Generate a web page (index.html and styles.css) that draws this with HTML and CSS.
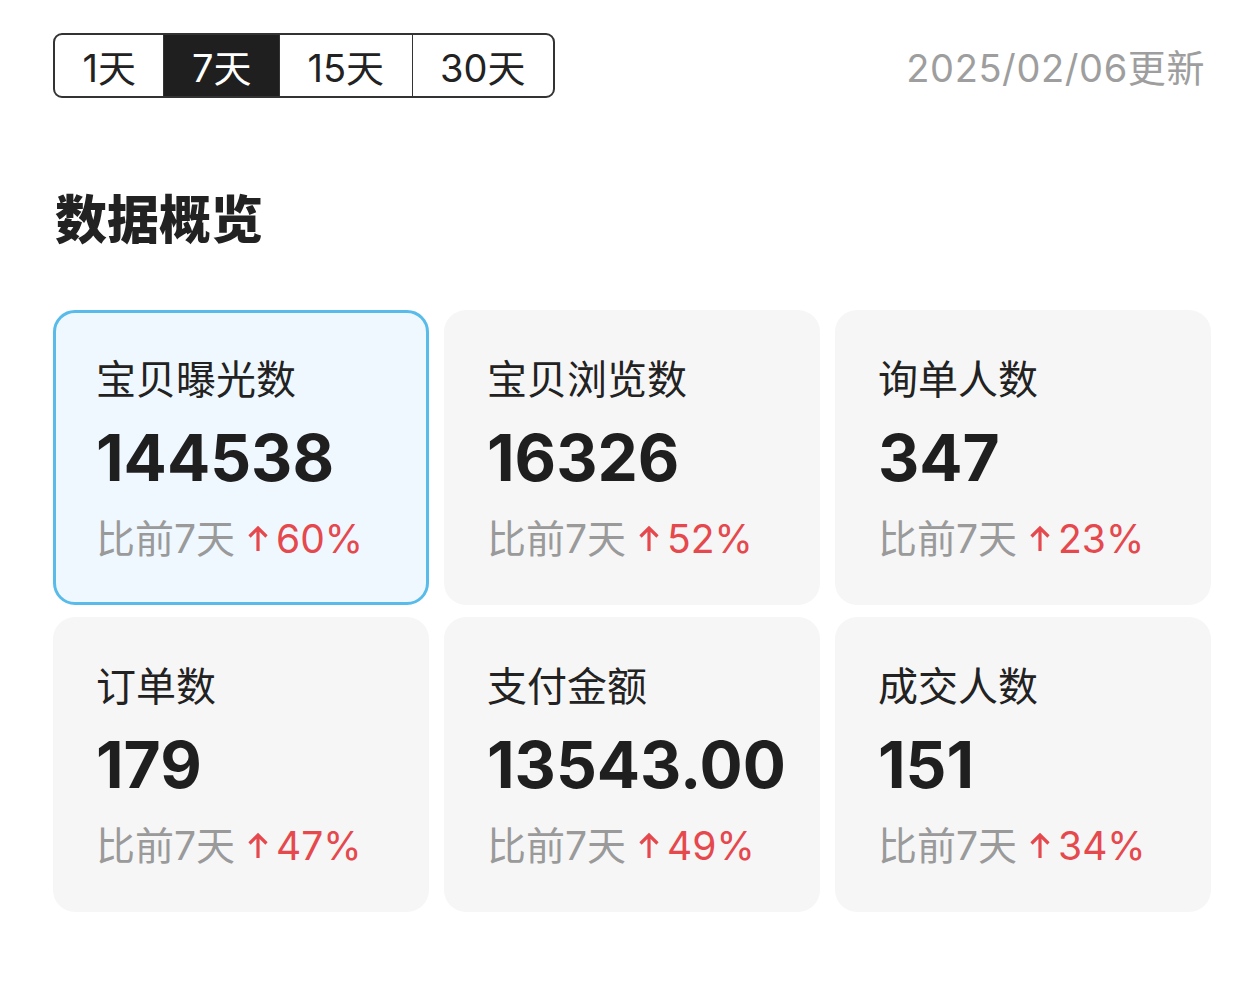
FILE: index.html
```html
<!DOCTYPE html>
<html lang="zh-CN">
<head>
    <meta charset="UTF-8">
    <meta name="viewport" content="width=device-width, initial-scale=1.0">
    <title>数据概览</title>
    <link rel="stylesheet" href="styles.css">
</head>
<body>
    <div class="header">
        <div class="tabs">
            <div class="tab">1天</div>
            <div class="tab active">7天</div>
            <div class="tab">15天</div>
            <div class="tab">30天</div>
        </div>
        <div class="update-time">2025/02/06更新</div>
    </div>

    <h2 class="section-title">数据概览</h2>

    <div class="stats">
        <div class="stat-card selected">
            <div class="stat-label">宝贝曝光数</div>
            <div class="stat-value">144538</div>
            <div class="stat-compare">比前7天<svg class="arrow" viewBox="0 0 22 28"><path d="M11 26V3M2.5 11.5L11 3l8.5 8.5"/></svg><span class="rate">60%</span></div>
        </div>
        <div class="stat-card">
            <div class="stat-label">宝贝浏览数</div>
            <div class="stat-value">16326</div>
            <div class="stat-compare">比前7天<svg class="arrow" viewBox="0 0 22 28"><path d="M11 26V3M2.5 11.5L11 3l8.5 8.5"/></svg><span class="rate">52%</span></div>
        </div>
        <div class="stat-card">
            <div class="stat-label">询单人数</div>
            <div class="stat-value">347</div>
            <div class="stat-compare">比前7天<svg class="arrow" viewBox="0 0 22 28"><path d="M11 26V3M2.5 11.5L11 3l8.5 8.5"/></svg><span class="rate">23%</span></div>
        </div>
        <div class="stat-card">
            <div class="stat-label">订单数</div>
            <div class="stat-value">179</div>
            <div class="stat-compare">比前7天<svg class="arrow" viewBox="0 0 22 28"><path d="M11 26V3M2.5 11.5L11 3l8.5 8.5"/></svg><span class="rate">47%</span></div>
        </div>
        <div class="stat-card">
            <div class="stat-label">支付金额</div>
            <div class="stat-value">13543.00</div>
            <div class="stat-compare">比前7天<svg class="arrow" viewBox="0 0 22 28"><path d="M11 26V3M2.5 11.5L11 3l8.5 8.5"/></svg><span class="rate">49%</span></div>
        </div>
        <div class="stat-card">
            <div class="stat-label">成交人数</div>
            <div class="stat-value">151</div>
            <div class="stat-compare">比前7天<svg class="arrow" viewBox="0 0 22 28"><path d="M11 26V3M2.5 11.5L11 3l8.5 8.5"/></svg><span class="rate">34%</span></div>
        </div>
    </div>
</body>
</html>
```

FILE: styles.css
```css
body {
    font-family: Inter, "Noto Sans CJK SC", sans-serif;
    color: #222;
    margin: 0;
    padding: 33px 49px 0 53px;
    background-color: #fff;
}
.header {
    display: flex;
    justify-content: space-between;
    align-items: center;
}
.tabs {
    display: flex;
    height: 65px;
    box-sizing: border-box;
    border: 2px solid #333;
    border-radius: 9px;
    overflow: hidden;
}
.tab {
    display: flex;
    align-items: center;
    padding: 0 27.5px;
    font-size: 38px;
    font-weight: 400;
    color: #222;
    border-left: 1.5px solid #333;
}
.tab:first-child {
    border-left: none;
}
.tab.active {
    background-color: #1f1f1f;
    color: #fff;
}
.update-time {
    font-size: 38px;
    font-weight: 400;
    letter-spacing: 0.6px;
    color: #9e9e9e;
    margin-right: 6px;
}
.section-title {
    font-family: "Noto Sans CJK SC", sans-serif;
    font-size: 52px;
    font-weight: 800;
    line-height: 62px;
    color: #222;
    margin: 88px 0 62px 2px;
}
.stats {
    display: grid;
    grid-template-columns: repeat(3, minmax(0, 1fr));
    column-gap: 15px;
    row-gap: 12px;
}
.stat-card {
    height: 295px;
    box-sizing: border-box;
    border: 3px solid transparent;
    border-radius: 22px;
    background-color: #f6f6f6;
    padding: 0 40px;
    display: flex;
    flex-direction: column;
    justify-content: center;
}
.stat-card.selected {
    background-color: #eff8fe;
    border-color: #58bbe9;
}
.stat-label {
    font-family: "Noto Sans CJK SC", sans-serif;
    font-size: 40px;
    line-height: 48px;
    color: #222;
}
.stat-value {
    font-size: 64px;
    font-weight: 700;
    line-height: 84px;
    color: #1f1f1f;
    margin: 15px 0 16px;
}
.stat-compare {
    display: flex;
    align-items: center;
    font-size: 39px;
    font-weight: 400;
    line-height: 46px;
    color: #9a9a9a;
}
.arrow {
    width: 22px;
    height: 28px;
    margin: 0 7px 0 12px;
    fill: none;
    stroke: #e5484d;
    stroke-width: 3.2;
}
.rate {
    color: #e5484d;
}
```
